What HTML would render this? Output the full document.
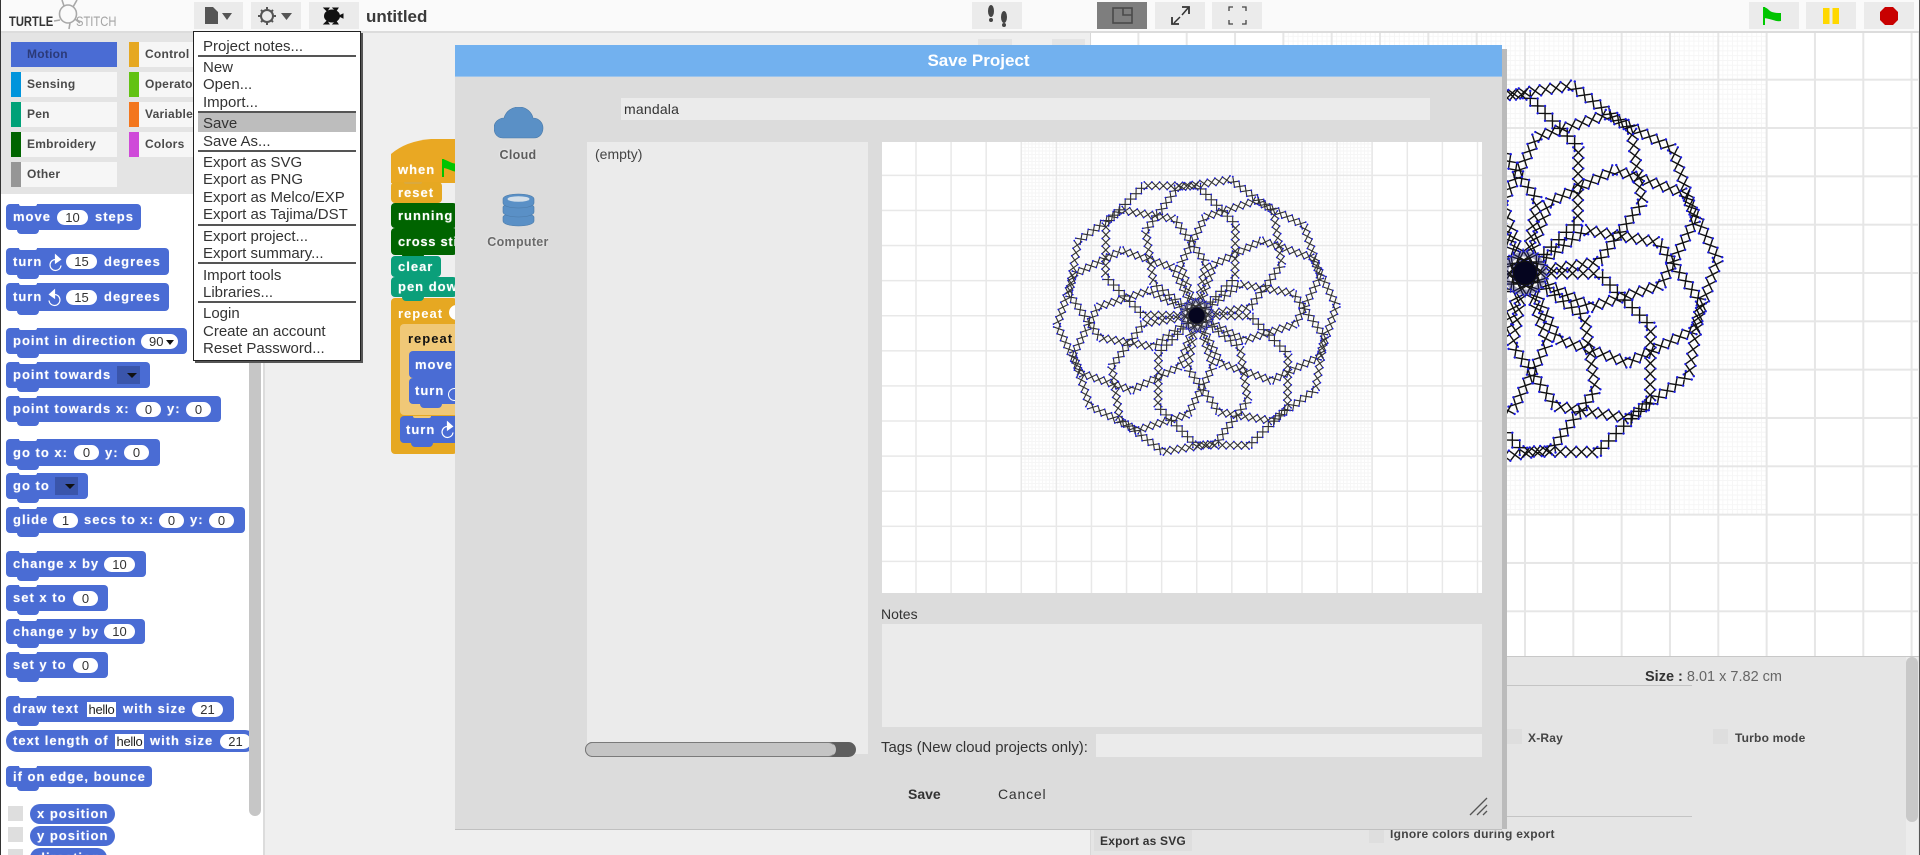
<!DOCTYPE html>
<html lang="en"><head><meta charset="utf-8"><title>TurtleStitch</title>
<style>
html,body{margin:0;padding:0;background:#fff}
body{width:1920px;height:855px;overflow:hidden;font-family:"Liberation Sans",sans-serif}
#r{position:relative;width:1920px;height:855px;overflow:hidden;filter:blur(.35px);background:#efefef}
#r div,#r svg,#r span,#r i{position:absolute}
i{font-style:normal;white-space:nowrap}
.tb{background:#ebebeb;top:2px;height:27px}
.cat{height:25px;width:106px;background:#f6f6f6;font-weight:bold;font-size:12px;letter-spacing:.25px;color:#4a4a4a;line-height:25px}
.cat u{position:absolute;left:0;top:0;width:10px;height:25px}
.cat i{left:16px}
.b{--c:#4a6cd4;background:var(--c);border-radius:4px;left:6px;color:#fff;font-weight:bold;font-size:13px;letter-spacing:1px}
.b::after{content:"";position:absolute;left:11px;bottom:-4px;width:22px;height:4px;background:var(--c);border-radius:0 0 6px 6px}
.b::before{content:"";position:absolute;left:13px;top:0;width:18px;height:2px;background:var(--d,#fff);border-radius:0 0 5px 5px}
.b.n::before,.b.n::after{display:none}
.b>i{top:50%;transform:translateY(-50%);line-height:14px;text-shadow:0 0 1px rgba(255,255,255,.5)}
.o{background:#fff;border-radius:8px;top:50%;margin-top:-7.5px;height:15px;color:#333;font-weight:normal;font-size:13px;letter-spacing:0;line-height:15px;text-align:center}
.h{background:#fff;top:50%;margin-top:-7.5px;width:29px;height:15px;color:#222;font-weight:normal;font-size:13px;letter-spacing:-.3px;line-height:15px;text-align:center}
.dd{top:50%;margin-top:-9px;height:18px;width:23px;background:#3a55ab}
.dd::after{content:"";position:absolute;right:3px;top:7px;border:5px solid transparent;border-top:5px solid #111;border-bottom:0}
.m{left:203px;font-size:15px;color:#333;line-height:17px;white-space:nowrap}
.ml{left:198px;width:158px;height:2px;background:#555}
.box{background:#ebebeb}
.cb{width:15px;height:15px;background:#dedede}
.lb{font-weight:bold;font-size:12px;letter-spacing:.2px;color:#444;white-space:nowrap;line-height:14px}
.bb{background:#e9a823}
</style></head><body>
<div id="r">

<!-- shared mandala defs -->
<svg width="0" height="0" style="left:0;top:0">
<defs>
<g id="e">
<path fill="none" d="M0-7l14.286 14m-14.286 0l14.286-14l14.286 14m-14.286 0l14.286-14l14.286 14m-14.286 0l14.286-14l14.286 14m-14.286 0l14.286-14l14.286 14m-14.286 0l14.286-14l14.286 14m-14.286 0l14.286-14l14.286 14m-14.286 0l14.286-14"/>
<path fill="none" stroke="#1c1ce0" stroke-width="3.200" stroke-linecap="round" d="M0-7h.01M14.286-7h.01M28.571-7h.01M42.857-7h.01M57.143-7h.01M71.429-7h.01M85.714-7h.01M100-7h.01M0 7h.01M14.286 7h.01M28.571 7h.01M42.857 7h.01M57.143 7h.01M71.429 7h.01M85.714 7h.01M100 7h.01"/>
</g>
<g id="oc">
<use href="#e"/>
<use href="#e" transform="translate(100 0) rotate(45)"/>
<use href="#e" transform="translate(170.71 70.71) rotate(90)"/>
<use href="#e" transform="translate(170.71 170.71) rotate(135)"/>
<use href="#e" transform="translate(100 241.42) rotate(180)"/>
<use href="#e" transform="translate(0 241.42) rotate(225)"/>
<use href="#e" transform="translate(-70.71 170.71) rotate(270)"/>
<use href="#e" transform="translate(-70.71 70.71) rotate(315)"/>
</g>
<g id="ma">
<use href="#oc" transform="rotate(-71.5)"/>
<use href="#oc" transform="rotate(-35.5)"/>
<use href="#oc" transform="rotate(.5)"/>
<use href="#oc" transform="rotate(36.5)"/>
<use href="#oc" transform="rotate(72.5)"/>
<use href="#oc" transform="rotate(108.5)"/>
<use href="#oc" transform="rotate(144.5)"/>
<use href="#oc" transform="rotate(180.5)"/>
<use href="#oc" transform="rotate(216.5)"/>
<use href="#oc" transform="rotate(252.5)"/>
<circle r="26" fill="none" stroke="#2a2a70" stroke-width="7" stroke-opacity=".4"/>
<circle r="32" fill="none" stroke="#1c1ce0" stroke-width="2.4" stroke-dasharray="2 5"/>
<circle r="16" fill="#05051f"/>
</g>
</defs>
</svg>

<!-- top bar -->
<div style="left:0;top:0;width:1920px;height:33px;background:#fafafa;border-bottom:2px solid #dcdcdc;box-sizing:border-box"></div>
<i style="left:9px;top:14px;font-weight:bold;font-size:13.5px;line-height:15px;color:#333;transform:scaleX(.83);transform-origin:0 0">TURTLE</i>
<i style="left:76px;top:14px;font-size:14px;line-height:15px;color:#a4a4a4;transform:scaleX(.8);transform-origin:0 0">STITCH</i>
<svg style="left:52px;top:0" width="34" height="31" viewBox="0 0 34 31" fill="none" stroke="#a8a8a8" stroke-width="1.6"><ellipse cx="16" cy="14" rx="8.500" ry="9"/><path d="M8 20L2 21M21 7L25 0M12 6L10 0M18 23L17 29M23 19L28 23"/></svg>

<div class="tb" style="left:194px;width:49px"></div>
<svg style="left:194px;top:2px" width="49" height="27"><path d="M11 5h8l5 5v12H11z" fill="#555"/><path d="M28 11h10l-5 7z" fill="#555"/></svg>
<div class="tb" style="left:251px;width:50px"></div>
<svg style="left:251px;top:2px" width="50" height="27"><circle cx="16" cy="14" r="6" fill="none" stroke="#555" stroke-width="2"/><path d="M16 5v3M16 20v3M7 14h3M22 14h3M10 8l2 2M20 18l2 2M22 8l-2 2M12 18l-2 2" stroke="#555" stroke-width="2"/><path d="M30 11h11l-5.500 7z" fill="#555"/></svg>
<div class="tb" style="left:309px;width:50px"></div>
<svg style="left:309px;top:2px" width="50" height="27"><ellipse cx="23" cy="14" rx="8" ry="6.500" fill="#111"/><path d="M30 14l4-2v4zM18 9l-3-3h5zM18 19l-3 3h5zM27 9l2-3h-5zM27 19l2 3h-5z" fill="#111" stroke="#111"/></svg>
<i style="left:366px;top:7px;font-weight:bold;font-size:17px;line-height:20px;color:#3a3a3a">untitled</i>

<div class="tb" style="left:972px;width:50px"></div>
<svg style="left:972px;top:2px" width="50" height="27" fill="#444"><ellipse cx="19" cy="9" rx="3" ry="6"/><ellipse cx="19" cy="18" rx="2" ry="2"/><ellipse cx="32" cy="15" rx="3" ry="6"/><ellipse cx="32" cy="23" rx="2" ry="2"/></svg>
<div class="tb" style="left:1097px;width:50px;background:#7e7e7e"></div>
<svg style="left:1097px;top:2px" width="50" height="27" fill="none" stroke="#4a4a4a" stroke-width="1.6"><rect x="16" y="6" width="19" height="15"/><path d="M26 6v7h9"/></svg>
<div class="tb" style="left:1155px;width:50px"></div>
<svg style="left:1155px;top:2px" width="50" height="27" fill="none" stroke="#333" stroke-width="1.5"><path d="M19 21l6-6M27 13l6-7"/><path d="M27 5h7v7M17 15v7h7" stroke-width="1.8"/></svg>
<div class="tb" style="left:1212px;width:50px"></div>
<svg style="left:1212px;top:2px" width="50" height="27" fill="none" stroke="#444" stroke-width="1.3"><path d="M17 9V5h4M30 5h4v4M34 18v4h-4M21 22h-4v-4"/></svg>

<div class="tb" style="left:1749px;width:50px"></div>
<svg style="left:1749px;top:2px" width="50" height="27"><path d="M14 5h2v18h-2z" fill="#0c0"/><path d="M15 5c4 1 5 4 8 5 3 1 6 1 9 1v8c-5 1-9-2-17-3z" fill="#00c400"/></svg>
<div class="tb" style="left:1806px;width:50px"></div>
<svg style="left:1806px;top:2px" width="50" height="27" fill="#ffd800"><rect x="17" y="6" width="6.500" height="16"/><rect x="26.500" y="6" width="6.500" height="16"/></svg>
<div class="tb" style="left:1864px;width:50px"></div>
<svg style="left:1864px;top:2px" width="50" height="27"><path d="M21 5h8l5 5v8l-5 5h-8l-5-5v-8z" fill="#c80000"/></svg>

<!-- palette -->
<div style="left:0;top:33px;width:263px;height:822px;background:#fff;border-right:2px solid #dcdcdc"></div>
<div style="left:0;top:33px;width:263px;height:161px;background:#e4e4e4"></div>
<div class="cat" style="left:11px;top:42px;background:#4a6cd4;color:#2b3a78"><i>Motion</i></div>
<div class="cat" style="left:11px;top:72px"><u style="background:#0094dc"></u><i>Sensing</i></div>
<div class="cat" style="left:11px;top:102px"><u style="background:#00a178"></u><i>Pen</i></div>
<div class="cat" style="left:11px;top:132px"><u style="background:#006400"></u><i>Embroidery</i></div>
<div class="cat" style="left:11px;top:162px"><u style="background:#969696"></u><i>Other</i></div>
<div class="cat" style="left:129px;top:42px"><u style="background:#e6a822"></u><i>Control</i></div>
<div class="cat" style="left:129px;top:72px"><u style="background:#62c213"></u><i>Operators</i></div>
<div class="cat" style="left:129px;top:102px"><u style="background:#f3761d"></u><i>Variables</i></div>
<div class="cat" style="left:129px;top:132px"><u style="background:#cf4ad9"></u><i>Colors</i></div>

<div style="left:249px;top:196px;width:12px;height:620px;background:#c6c6c6;border-radius:6px"></div>

<div style="left:0;top:194px;width:249px;height:661px;overflow:hidden">
<div style="left:0;top:-194px;width:249px;height:855px">
<div class="b" style="top:204px;width:135px;height:26px"><i style="left:7px">move</i><div class="o" style="left:51px;width:31px">10</div><i style="left:89px">steps</i></div>

<div class="b" style="top:248px;width:163px;height:27px"><i style="left:7px">turn</i><svg style="left:41px;top:5px" width="16" height="20" fill="none" stroke="#fff" stroke-width="1.2"><path d="M9 6.500a5.500 5.500 0 1 0 5 6"/><path d="M8.500 2l5 4.500-5 3.500z" fill="#fff"/></svg><div class="o" style="left:60px;width:31px">15</div><i style="left:98px">degrees</i></div>

<div class="b" style="top:283px;width:163px;height:28px"><i style="left:7px">turn</i><svg style="left:41px;top:5px" width="16" height="20" fill="none" stroke="#fff" stroke-width="1.2"><path d="M7 6.500a5.500 5.500 0 1 1-5 6"/><path d="M7.500 2l-5 4.500 5 3.500z" fill="#fff"/></svg><div class="o" style="left:60px;width:31px">15</div><i style="left:98px">degrees</i></div>

<div class="b" style="top:328px;width:181px;height:26px"><i style="left:7px">point in direction</i><div class="o" style="left:135px;width:37px;text-align:left;text-indent:8px">90<span style="left:25px;top:6px;border:4px solid transparent;border-top:5px solid #111;border-bottom:0"></span></div></div>

<div class="b" style="top:362px;width:144px;height:26px"><i style="left:7px">point towards</i><div class="dd" style="left:111px"></div></div>

<div class="b" style="top:396px;width:215px;height:26px"><i style="left:7px">point towards</i><i style="left:110px">x:</i><div class="o" style="left:130px;width:25px">0</div><i style="left:161px">y:</i><div class="o" style="left:180px;width:25px">0</div></div>

<div class="b" style="top:439px;width:154px;height:27px"><i style="left:7px">go to x:</i><div class="o" style="left:68px;width:25px">0</div><i style="left:99px">y:</i><div class="o" style="left:118px;width:25px">0</div></div>

<div class="b" style="top:473px;width:82px;height:26px"><i style="left:7px">go to</i><div class="dd" style="left:49px"></div></div>

<div class="b" style="top:507px;width:239px;height:26px"><i style="left:7px">glide</i><div class="o" style="left:47px;width:25px">1</div><i style="left:78px">secs to x:</i><div class="o" style="left:153px;width:25px">0</div><i style="left:184px">y:</i><div class="o" style="left:203px;width:25px">0</div></div>

<div class="b" style="top:551px;width:140px;height:26px"><i style="left:7px">change x by</i><div class="o" style="left:98px;width:31px">10</div></div>
<div class="b" style="top:585px;width:102px;height:26px"><i style="left:7px">set x to</i><div class="o" style="left:67px;width:25px">0</div></div>
<div class="b" style="top:619px;width:139px;height:25px"><i style="left:7px">change y by</i><div class="o" style="left:98px;width:31px">10</div></div>
<div class="b" style="top:652px;width:102px;height:26px"><i style="left:7px">set y to</i><div class="o" style="left:67px;width:25px">0</div></div>

<div class="b" style="top:696px;width:228px;height:26px"><i style="left:7px">draw text</i><div class="h" style="left:81px">hello</div><i style="left:117px">with size</i><div class="o" style="left:186px;width:31px">21</div></div>
<div class="b n" style="top:730px;width:250px;height:22px;border-radius:11px"><i style="left:7px">text length of</i><div class="h" style="left:109px">hello</div><i style="left:144px">with size</i><div class="o" style="left:214px;width:31px">21</div></div>
<div class="b" style="top:766px;width:146px;height:21px"><i style="left:7px">if on edge, bounce</i></div>

<div class="cb" style="left:8px;top:806px"></div>
<div class="b n" style="left:30px;top:804px;width:85px;height:20px;border-radius:10px"><i style="left:7px">x position</i></div>
<div class="cb" style="left:8px;top:827px"></div>
<div class="b n" style="left:30px;top:826px;width:85px;height:20px;border-radius:10px"><i style="left:7px">y position</i></div>
<div class="cb" style="left:8px;top:849px"></div>
<div class="b n" style="left:30px;top:848px;width:77px;height:20px;border-radius:10px"><i style="left:7px">direction</i></div>
</div></div>

<!-- scripts -->
<div style="left:978px;top:39px;width:34px;height:8px;background:#e4e4e4"></div>
<div style="left:1052px;top:39px;width:33px;height:8px;background:#e4e4e4"></div>

<svg style="left:391px;top:139px" width="70" height="44"><path d="M0 44V15Q15 2 40 0H70V44Z" fill="#e9a823"/></svg>
<div style="left:391px;top:298px;width:66px;height:156px;background:#e6a822;border-radius:4px"></div>
<div style="left:400px;top:324px;width:60px;height:91px;background:#f0c877;border-radius:4px 0 0 4px"></div>
<div class="b n" style="left:391px;top:153px;width:66px;height:29px;--c:transparent;border-radius:0"><i style="left:7px;top:60%">when</i></div>
<svg style="left:441px;top:158px" width="16" height="20"><path d="M1 1h2v18H1z" fill="#00c400"/><path d="M2 1c4 1 7 4 14 5v8C10 13 6 10 2 10z" fill="#00c400"/></svg>
<div class="b" style="left:391px;top:182px;width:51px;height:21px;--c:#e6a822;--d:#d9a93f"><i style="left:7px">reset</i></div>
<div class="b" style="left:391px;top:203px;width:66px;height:25px;--c:#006400;--d:#006400"><i style="left:7px">running</i></div>
<div class="b" style="left:391px;top:228px;width:66px;height:27px;--c:#006400;--d:#006400"><i style="left:7px;letter-spacing:.7px">cross sti</i></div>
<div class="b" style="left:391px;top:256px;width:50px;height:21px;--c:#0b9f7a;--d:#0b9f7a"><i style="left:7px">clear</i></div>
<div class="b" style="left:391px;top:277px;width:66px;height:20px;--c:#0b9f7a;--d:#0b9f7a"><i style="left:7px">pen dow</i></div>
<i style="left:398px;top:306px;color:#fff;font-weight:bold;font-size:13px;letter-spacing:1px;line-height:15px">repeat</i>
<div style="left:449px;top:305px;width:15px;height:15px;background:#fff;border-radius:8px"></div>
<i style="left:408px;top:331px;color:#111;font-weight:bold;font-size:13px;letter-spacing:1px;line-height:15px">repeat</i>
<div class="b" style="left:409px;top:351px;width:50px;height:27px;--d:#4a6cd4"><i style="left:6px">move</i></div>
<div class="b" style="left:409px;top:378px;width:50px;height:26px;--d:#4a6cd4"><i style="left:6px">turn</i><div style="left:39px;top:10px;width:11px;height:11px;border:1.2px solid #fff;border-radius:50%"></div></div>
<div class="b" style="left:400px;top:416px;width:59px;height:27px;--d:#f0c877"><i style="left:6px">turn</i><svg style="left:39px;top:2px" width="18" height="22" fill="none" stroke="#fff" stroke-width="1.2"><path d="M9 8.500a5.500 5.500 0 1 0 5 6"/><path d="M8.500 4l5 4.500-5 3.500z" fill="#fff"/></svg></div>

<!-- stage -->
<div style="left:1091px;top:33px;width:827px;height:623px;background:#fff;overflow:hidden">
 <div style="left:192px;top:-2px;width:483.300px;height:483.300px;background-image:linear-gradient(to right,#f6f6f6 1px,transparent 1px),linear-gradient(to bottom,#f6f6f6 1px,transparent 1px);background-size:4.833px 4.833px"></div>
 <div style="left:0;top:0;width:827px;height:623px;background-image:linear-gradient(to right,#e6e6e6 2px,transparent 2px),linear-gradient(to bottom,#e6e6e6 2px,transparent 2px);background-size:48.333px 48.333px;background-position:433px 239px"></div>
 <svg style="left:0;top:0" width="827" height="623"><use href="#ma" stroke="#111" stroke-width="1.900" transform="translate(434 240) scale(.739)"/></svg>
</div>
<div style="left:1090px;top:33px;width:1px;height:822px;background:#d8d8d8"></div>

<!-- corral -->
<div style="left:1091px;top:656px;width:829px;height:199px;background:#e5e5e5;border-top:1px solid #c8c8c8;box-sizing:border-box"></div>
<div style="left:1906px;top:657px;width:12px;height:198px;background:#ececec"></div>
<div style="left:1906px;top:657px;width:12px;height:165px;background:#c8c8c8;border-radius:6px"></div>
<i style="left:1645px;top:669px;font-size:14.500px;line-height:16px;color:#666"><b style="color:#333">Size :</b> 8.01 x 7.82 cm</i>
<div style="left:1507px;top:685px;width:185px;height:1px;background:#c4c4c4"></div>
<div style="left:1507px;top:816px;width:185px;height:1px;background:#c4c4c4"></div>
<div class="cb" style="left:1507px;top:729px"></div>
<i class="lb" style="left:1528px;top:731px">X-Ray</i>
<div class="cb" style="left:1713px;top:729px"></div>
<i class="lb" style="left:1735px;top:731px">Turbo mode</i>
<div style="left:1094px;top:830px;width:98px;height:21px;background:#dedede"></div>
<i class="lb" style="left:1100px;top:834px;color:#333">Export as SVG</i>
<div class="cb" style="left:1369px;top:829px;height:14px"></div>
<i class="lb" style="left:1390px;top:827px;letter-spacing:.3px">Ignore colors during export</i>

<!-- dialog -->
<div style="left:1502px;top:49px;width:5px;height:780px;background:#bbb"></div>
<div style="left:455px;top:45px;width:1047px;height:784px;background:#dcdcdc;box-shadow:0 1px 0 #c0c0c0"></div>
<div style="left:455px;top:45px;width:1047px;height:32px;background:#72b1ef;border-bottom:1px solid #9cc4ec;box-sizing:border-box;text-align:center;color:#fff;font-weight:bold;font-size:17px;line-height:31px"><i style="position:static">Save Project</i></div>

<div class="box" style="left:621px;top:98px;width:809px;height:22px"></div>
<i style="left:624px;top:101px;font-size:14px;line-height:16px;color:#333;letter-spacing:.2px">mandala</i>

<svg style="left:494px;top:107px" width="50" height="33" viewBox="494 107 50 33"><path d="M503 138C496 138 494 132 494 128C494 122 499 118 504 118C506 111 512 107 519 107C527 107 532 113 533 118C539 118 543 123 543 128C543 134 539 138 534 138Z" fill="#5a90c6" stroke="#4b7aa8" stroke-width=".6"/></svg>
<i style="left:518px;top:148px;transform:translateX(-50%);font-size:12.500px;line-height:14px;color:#333;text-shadow:0 0 2px #fff;letter-spacing:.3px;font-weight:bold;opacity:.75">Cloud</i>
<svg style="left:502px;top:193px" width="34" height="34" fill="#5a90c6" stroke="#4b7aa8" stroke-width=".6"><path d="M1 24c0-2 7-4 15.500-4S32 22 32 24v4c0 3-7 5-15.500 5S1 31 1 28z"/><path d="M1 14c0-2 7-4 15.500-4S32 12 32 14v5c0 3-7 5-15.500 5S1 22 1 19z"/><path d="M1 6c0-3 7-5 15.500-5S32 3 32 6v4c0 3-7 5-15.500 5S1 13 1 10z"/><ellipse cx="16.500" cy="6" rx="11" ry="2.800" fill="#d4dfe9" stroke="none"/></svg>
<i style="left:518px;top:235px;transform:translateX(-50%);font-size:12.500px;line-height:14px;color:#444;text-shadow:0 0 2px #fff;letter-spacing:.3px;font-weight:bold;opacity:.75">Computer</i>

<div class="box" style="left:587px;top:142px;width:281px;height:612px"></div>
<i style="left:595px;top:146px;font-size:14px;line-height:16px;color:#444">(empty)</i>
<div style="left:585px;top:742px;width:271px;height:15px;background:#5e5e5e;border-radius:8px"></div>
<div style="left:585px;top:742px;width:251px;height:15px;background:#c4c4c4;border-radius:8px;border:1px solid #7a7a7a;box-sizing:border-box;border-right-color:#c4c4c4"></div>

<div style="left:882px;top:142px;width:600px;height:451px;background:#fff;overflow:hidden">
 <div style="left:139px;top:-2px;width:351px;height:351px;background-image:linear-gradient(to right,#f6f6f6 1px,transparent 1px),linear-gradient(to bottom,#f6f6f6 1px,transparent 1px);background-size:3.510px 3.510px"></div>
 <div style="left:0;top:0;width:600px;height:451px;background-image:linear-gradient(to right,#e8e8e8 1.500px,transparent 1.500px),linear-gradient(to bottom,#e8e8e8 1.500px,transparent 1.500px);background-size:35.100px 35.100px;background-position:314px 173px"></div>
 <svg style="left:0;top:0" width="600" height="451"><use href="#ma" stroke="#333" stroke-width="2.100" transform="translate(314.700 173.500) scale(.536)"/></svg>
</div>

<i style="left:881px;top:606px;font-size:14px;line-height:16px;color:#333">Notes</i>
<div class="box" style="left:882px;top:624px;width:600px;height:103px"></div>
<i style="left:881px;top:740px;font-size:14.900px;line-height:16px;color:#333">Tags (New cloud projects only):</i>
<div class="box" style="left:1096px;top:734px;width:386px;height:23px"></div>

<i style="left:908px;top:786px;font-weight:bold;font-size:14px;line-height:16px;color:#333">Save</i>
<i style="left:998px;top:786px;font-size:14px;line-height:16px;color:#333;letter-spacing:.8px">Cancel</i>
<svg style="left:1468px;top:795px" width="22" height="22" stroke="#555" stroke-width="1.300" fill="none"><path d="M2 20L19 3M9 20L19 10M15 20L19 16"/></svg>

<!-- menu -->
<div style="left:193px;top:31px;width:168px;height:330px;background:#fff;border:1px solid #222;box-sizing:border-box;box-shadow:2px 2px 0 #555"></div>
<div style="left:198px;top:113px;width:158px;height:19px;background:#bdbdbd"></div>
<div class="ml" style="top:55px"></div><div class="ml" style="top:111px"></div><div class="ml" style="top:150px"></div><div class="ml" style="top:224px"></div><div class="ml" style="top:262px"></div><div class="ml" style="top:301px"></div>
<i class="m" style="top:38px">Project notes...</i>
<i class="m" style="top:59px">New</i>
<i class="m" style="top:76px">Open...</i>
<i class="m" style="top:94px">Import...</i>
<i class="m" style="top:115px">Save</i>
<i class="m" style="top:133px">Save As...</i>
<i class="m" style="top:154px">Export as SVG</i>
<i class="m" style="top:171px">Export as PNG</i>
<i class="m" style="top:189px">Export as Melco/EXP</i>
<i class="m" style="top:206px">Export as Tajima/DST</i>
<i class="m" style="top:228px">Export project...</i>
<i class="m" style="top:245px">Export summary...</i>
<i class="m" style="top:267px">Import tools</i>
<i class="m" style="top:284px">Libraries...</i>
<i class="m" style="top:305px">Login</i>
<i class="m" style="top:323px">Create an account</i>
<i class="m" style="top:340px">Reset Password...</i>

<div style="left:0;top:0;width:1px;height:855px;background:#333"></div>
<div style="left:1919px;top:0;width:1px;height:855px;background:#555"></div>
</div>
</body></html>
